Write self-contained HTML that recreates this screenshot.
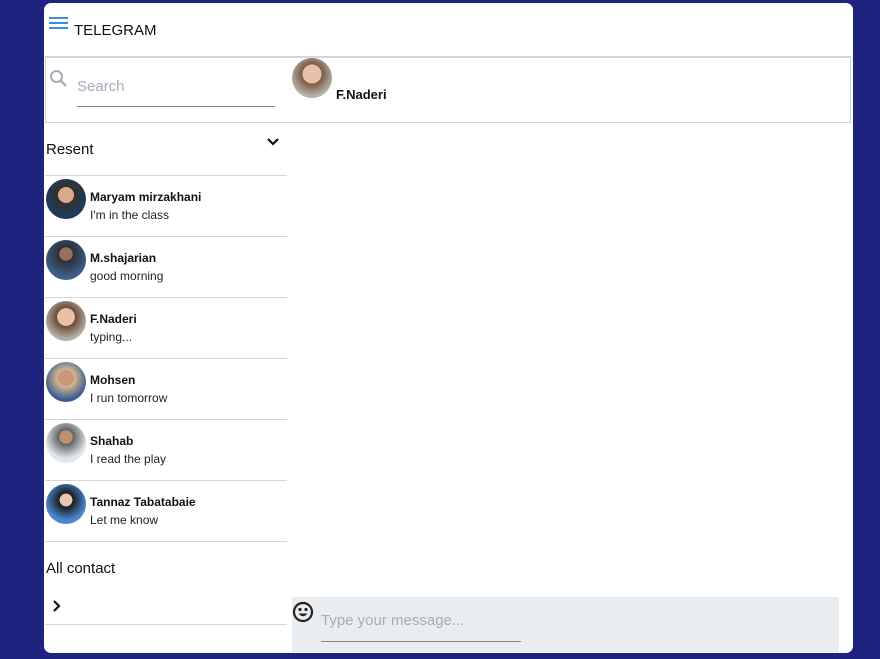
<!DOCTYPE html><html><head><style>
*{margin:0;padding:0;box-sizing:border-box}
body{width:880px;height:659px;background:#1e237e;font-family:"Liberation Sans",sans-serif;position:relative;overflow:hidden}
.card{position:absolute;left:44px;top:3px;width:809px;height:650px;background:#fff;border-radius:7px}
.a{position:absolute}
.row{position:absolute;left:45px;width:242px;height:61px;border-top:1px solid #d6d6d6}
.av{position:absolute;left:1px;top:3px;width:40px;height:40px;border-radius:50%;overflow:hidden}
.nm{position:absolute;left:45px;top:14px;font-size:12px;font-weight:bold;color:#111}
.ms{position:absolute;left:45px;top:32px;font-size:12px;color:#222}
</style></head><body>
<div class="card"></div>
<div class="a" style="left:49px;top:17px;width:19px;height:2px;background:#3a8fd6;box-shadow:0 5px 0 #3a8fd6,0 10px 0 #3a8fd6"></div>
<div class="a" style="left:74px;top:22px;font-size:15px;color:#111">TELEGRAM</div>
<div class="a" style="left:45px;top:56px;width:806px;height:67px;border:1px solid #cfd6dc;border-top:2px solid #cfd6dc"></div>
<svg class="a" style="left:49px;top:69px" width="20" height="20" viewBox="0 0 20 20"><circle cx="7.5" cy="7.5" r="5.5" fill="none" stroke="#aab" stroke-width="2"/><path d="M11.5 11.5L17 17" stroke="#aab" stroke-width="2.4"/></svg>
<div class="a" style="left:77px;top:78px;font-size:15px;color:#aab">Search</div>
<div class="a" style="left:77px;top:106px;width:198px;height:1px;background:#888"></div>
<div class="a" style="left:292px;top:58px;width:40px;height:40px;border-radius:50%;background:radial-gradient(circle at 50% 40%,#e8c0a6 0 30%,#7a5a44 31%,#b5b0a8 70%)"></div>
<div class="a" style="left:336px;top:87px;font-size:13px;font-weight:bold;color:#111">F.Naderi</div>
<div class="a" style="left:46px;top:141px;font-size:15px;color:#111">Resent</div>
<svg class="a" style="left:266px;top:137px" width="14" height="10"><path d="M2 2L7 7L12 2" fill="none" stroke="#111" stroke-width="2.2"/></svg>
<div class="row" style="top:175px"><div class="av" style="background:radial-gradient(circle at 50% 40%,#d9a98a 0 25%,#33302c 26%,#1f3a5a 65%)"></div><div class="nm">Maryam mirzakhani</div><div class="ms">I'm in the class</div></div>
<div class="row" style="top:236px"><div class="av" style="background:radial-gradient(circle at 50% 35%,#9a7058 0 20%,#2a2f38 21%,#3f5f88 70%)"></div><div class="nm">M.shajarian</div><div class="ms">good morning</div></div>
<div class="row" style="top:297px"><div class="av" style="background:radial-gradient(circle at 50% 40%,#e8c0a6 0 28%,#6a4a34 29%,#b5b0a8 70%)"></div><div class="nm">F.Naderi</div><div class="ms">typing...</div></div>
<div class="row" style="top:358px"><div class="av" style="background:radial-gradient(circle at 50% 40%,#c89878 0 25%,#d8b890 26%,#3a5a90 70%)"></div><div class="nm">Mohsen</div><div class="ms">I run tomorrow</div></div>
<div class="row" style="top:419px"><div class="av" style="background:radial-gradient(circle at 50% 35%,#c09070 0 20%,#606060 21%,#e0e6ea 65%)"></div><div class="nm">Shahab</div><div class="ms">I read the play</div></div>
<div class="row" style="top:480px"><div class="av" style="background:radial-gradient(circle at 50% 40%,#e8c8b0 0 20%,#1a1a1a 21%,#4a86d0 65%)"></div><div class="nm">Tannaz Tabatabaie</div><div class="ms">Let me know</div></div>
<div class="a" style="left:45px;top:541px;width:242px;height:1px;background:#d6d6d6"></div>
<div class="a" style="left:46px;top:560px;font-size:15px;color:#111">All contact</div>
<svg class="a" style="left:52px;top:599px" width="10" height="14"><path d="M2 2L7 7L2 12" fill="none" stroke="#111" stroke-width="2.2"/></svg>
<div class="a" style="left:45px;top:624px;width:242px;height:1px;background:#d6d6d6"></div>
<div class="a" style="left:292px;top:597px;width:547px;height:55px;background:#e9edf0"></div>
<svg class="a" style="left:292px;top:601px" width="22" height="22" viewBox="0 0 22 22"><circle cx="11" cy="11" r="9" fill="none" stroke="#222" stroke-width="2.2"/><circle cx="8" cy="8.5" r="1.6" fill="#222"/><circle cx="14" cy="8.5" r="1.6" fill="#222"/><path d="M6.5 12.5Q11 18 15.5 12.5Z" fill="#222"/></svg>
<div class="a" style="left:321px;top:612px;font-size:15px;color:#a8adb2">Type your message...</div>
<div class="a" style="left:321px;top:641px;width:200px;height:1px;background:#888"></div>
</body></html>
